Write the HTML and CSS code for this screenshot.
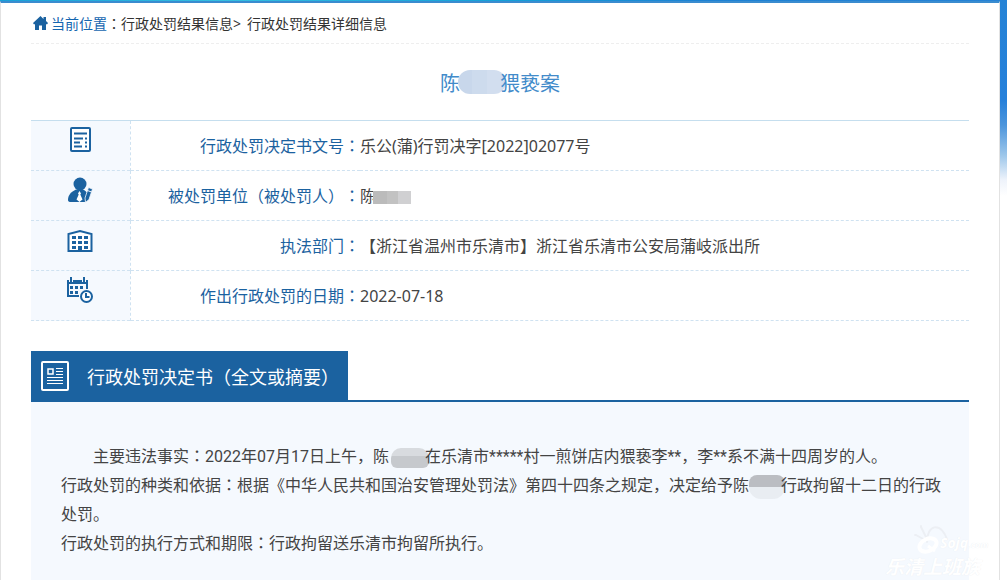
FILE: index.html
```html
<!DOCTYPE html>
<html lang="zh-CN">
<head>
  <meta charset="UTF-8" />
  <meta name="viewport" content="width=device-width, initial-scale=1.0" />
  <title>行政处罚结果详细信息</title>
  <link rel="stylesheet" href="styles.css">
</head>
<body>
  <main class="page">
    <!-- Breadcrumb -->
    <nav class="crumbs">
      <svg class="home" viewBox="0 0 15 14" aria-hidden="true">
        <path d="M7.500 0 0 7l.8 1.200H2V14h4V9.500h3V14h4V8.200h1.200L15 7l-2-2V1h-2.500v2z" fill="#1b62a0"/>
      </svg>
      <span class="here">当前位置</span><span class="colon">：</span><a href="#">行政处罚结果信息</a><span class="sep">&gt;</span><a href="#">行政处罚结果详细信息</a>
    </nav>

    <h1 class="title">陈<span class="mask mask-title"></span>猥亵案</h1>

    <!-- Case summary -->
    <table class="info">
      <tr>
        <td class="icon">
          <svg viewBox="0 0 26 26" aria-hidden="true">
            <rect x="4" y="1" width="19" height="23" rx="1" fill="#fff" stroke="#1b62a0" stroke-width="2"/>
            <path d="M7 6.500h13M7 11.500h9M7 15.500h6M7 19.500h8M18 11.500h2M18 15.500h2M18 19.500h2" stroke="#1b62a0" stroke-width="2"/>
          </svg>
        </td>
        <th scope="row">行政处罚决定书文号<span class="colon">：</span></th>
        <td>乐公(蒲)行罚决字[2022]02077号</td>
      </tr>
      <tr>
        <td class="icon">
          <svg viewBox="0 0 26 26" aria-hidden="true">
            <circle cx="13" cy="7" r="6.500" fill="#1b62a0"/>
            <path d="M1 23c0-5 3-8 8-10.500h7c2 1 3.500 2 4.500 4L18 25H4c-2 0-3-.5-3-2z" fill="#1b62a0"/>
            <path d="M12.500 14 11 16.500l.7 1L9.500 22.500l3 2.500 3-2.500-2.200-5 .7-1z" fill="#fff"/>
            <path d="m21.500 10.500 4 1.500-3.500 10.500-3.500 3-.5-4.500z" fill="#1b62a0" stroke="#f5f9fe" stroke-width=".8"/>
            <path d="m20.500 13.500 4 1.500" stroke="#f5f9fe"/>
          </svg>
        </td>
        <th scope="row">被处罚单位（被处罚人）<span class="colon">：</span></th>
        <td>陈<span class="mask mask-name"></span></td>
      </tr>
      <tr>
        <td class="icon">
          <svg viewBox="0 0 26 26" aria-hidden="true">
            <path d="M1.500 24V7L13 4l11.500 3v17z" fill="#fff" stroke="#1b62a0" stroke-width="2"/>
            <path d="M5 10.500h16M5 15.500h16M5 20.500h16" stroke="#1b62a0" stroke-width="3" stroke-dasharray="4 2"/>
            <path d="M11 19h4v6h-4z" fill="#1b62a0"/>
          </svg>
        </td>
        <th scope="row">执法部门<span class="colon">：</span></th>
        <td>【浙江省温州市乐清市】浙江省乐清市公安局蒲岐派出所</td>
      </tr>
      <tr>
        <td class="icon">
          <svg viewBox="0 0 26 26" aria-hidden="true">
            <path d="M1 4v15h11M20 4v8" fill="none" stroke="#1b62a0" stroke-width="2"/>
            <path d="M0 3h21v4H0z" fill="#1b62a0"/>
            <path d="M4 0v5M17 0v5" stroke="#f5f9fe" stroke-width="4"/>
            <path d="M4 0v5M17 0v5" stroke="#1b62a0" stroke-width="2"/>
            <path d="M3 10.500h14M3 15.500h9" stroke="#1b62a0" stroke-width="3" stroke-dasharray="3 2"/>
            <circle cx="19.500" cy="19.500" r="5.500" fill="#fff" stroke="#1b62a0" stroke-width="2"/>
            <path d="M19 16v4h3.500" fill="none" stroke="#1b62a0" stroke-width="2"/>
          </svg>
        </td>
        <th scope="row">作出行政处罚的日期<span class="colon">：</span></th>
        <td>2022-07-18</td>
      </tr>
    </table>

    <!-- Decision text -->
    <section class="decision">
      <div class="decision-head">
        <h2>
          <svg viewBox="0 0 28 30" aria-hidden="true">
            <rect x="1" y="1" width="26" height="28" rx="1" fill="none" stroke="#fff" stroke-width="2"/>
            <rect x="7" y="8" width="5" height="5" fill="none" stroke="#fff" stroke-width="1.500"/>
            <path d="M15 7.500h7M15 10.500h7M15 13.500h7M6 16.500h16M6 19.500h16M6 22.500h16" stroke="#fff"/>
          </svg>
          行政处罚决定书（全文或摘要）
        </h2>
      </div>
      <div class="decision-body">
        <p class="indent">主要违法事实<span class="colon">：</span>2022年07月17日上午，陈<span class="mask mask-fact"></span>在乐清市*****村一煎饼店内猥亵李**，李**系不满十四周岁的人。</p>
        <p>行政处罚的种类和依据<span class="colon">：</span>根据《中华人民共和国治安管理处罚法》第四十四条之规定，决定给予陈<span class="mask mask-ruling"></span>行政拘留十二日的行政处罚。</p>
        <p>行政处罚的执行方式和期限<span class="colon">：</span>行政拘留送乐清市拘留所执行。</p>
      </div>
    </section>
  </main>

  <!-- Watermark -->
  <div class="watermark">
    <div class="mark-logo">
      <svg viewBox="0 0 40 30" aria-hidden="true">
        <path d="M13 18C13 1 26-3 33 15M2 11l9 5M7 3l5 10M1 11h1M7 2v1" fill="none" stroke="#eceff4" stroke-width="2" stroke-linecap="round"/>
        <ellipse cx="14" cy="21" rx="9" ry="6" transform="rotate(-25 14 21)" fill="none" stroke="#fff" stroke-width="4"/>
        <path d="m14 22 7 5" stroke="#fff" stroke-width="3"/>
      </svg>
      <span>Sojq<small>.com</small></span>
    </div>
    <div class="mark-name">乐清上班族</div>
  </div>
</body>
</html>
```

FILE: styles.css
```css
:root {
  --blue: #1b62a0;
  --text: #444;
  --panel: #f5f9fe;
  --line: #cfe2f1;
}

* {
  box-sizing: border-box;
}

body {
  margin: 0;
  height: 100vh;
  padding: 1px 7px 0 0;
  overflow: hidden;
  position: relative;
  display: flex;
  font-family: "Noto Sans", "Noto Sans CJK SC", sans-serif;
  font-size: 16px;
  color: var(--text);
  text-spacing-trim: space-all;
  background:
    linear-gradient(to right, #18a0d8, #35bfe0 22%, #14a0d8 50%, #1c82d4 70%, transparent 99%) top / 100% 1px no-repeat,
    linear-gradient(#2583d6, #2680da 100px, #4c95dc 125px, #9cc6ea 155px, #eef3fb 180px, #fff 196px);
}

.page {
  flex: 1;
  min-width: 0;
  display: flex;
  flex-direction: column;
  padding: 0 30px;
  background: #fff;
  border: 1px solid #e2e2e2;
  border-top: 2px solid #3a8ccf;
  border-bottom: 0;
}

/* Full-width colon centred in its box */
.colon {
  font-family: "Noto Sans CJK JP", sans-serif;
  line-height: 1;
  -webkit-locale: "ja";
}

/* Breadcrumb */
.crumbs {
  display: flex;
  align-items: center;
  height: 41px;
  flex: none;
  padding-left: 2px;
  font-size: 14px;
  color: #333;
  border-bottom: 1px dashed #eee;
}

.crumbs a {
  color: #333;
  text-decoration: none;
}

.crumbs .sep {
  margin-right: 6px;
}

.home {
  width: 15px;
  height: 14px;
  margin-right: 3px;
}

.here {
  color: #1566b0;
}

.title {
  margin: 26px 0 22px;
  font-size: 20px;
  line-height: 28px;
  font-weight: 400;
  text-align: center;
  color: #428bca;
}

/* Pixelated name covers */
.mask {
  display: inline-block;
  vertical-align: middle;
}

.mask-title {
  width: 48px;
  height: 24px;
  margin: -8px -6px 0 -2px;
  border-radius: 12px;
  background: linear-gradient(to right, #c8d7eb 30%, #cddbed 30% 60%, #d2deef 60%);
}

.mask-name {
  width: 38px;
  height: 13px;
  margin-left: -3px;
  background: linear-gradient(to right, #bbb 36%, #c2c2c2 36% 66%, #d0d0d2 66%);
}

.mask-fact {
  width: 38px;
  height: 20px;
  margin: 0 -4px 0 2px;
  border-radius: 10px 10px 6px 6px;
  background: linear-gradient(#d8dbdf 40%, #c6c9cd 40%);
}

.mask-ruling {
  width: 36px;
  height: 24px;
  margin: 0 -4px 0 0;
  border-radius: 8px 8px 12px 12px;
  background: linear-gradient(#bbbdc2 50%, #e9edf2 50%);
}

/* Case summary */
.info {
  width: 100%;
  border-collapse: collapse;
  border-top: 1px solid #c5deee;
}

.info tr {
  height: 50px;
  border-bottom: 1px dashed var(--line);
}

.info th,
.info td {
  padding: 0;
  line-height: 24px;
  text-align: left;
}

.info th {
  width: 230px;
  font-weight: 400;
  text-align: right;
  color: var(--blue);
}

.info .icon {
  width: 99px;
  padding-top: 6px;
  vertical-align: top;
  background: var(--panel);
  border-right: 1px dashed var(--line);
}

.icon svg {
  display: block;
  width: 26px;
  height: 26px;
  margin: 0 auto;
}

/* Decision text */
.decision {
  flex: 1;
  display: flex;
  flex-direction: column;
  margin-top: 30px;
}

.decision-head {
  display: flex;
  border-bottom: 2px solid var(--blue);
}

.decision-head h2 {
  display: flex;
  align-items: center;
  gap: 18px;
  height: 49px;
  margin: 0;
  padding: 0 9px 0 10px;
  font-size: 18px;
  font-weight: 400;
  color: #fff;
  background: var(--blue);
}

.decision-head svg {
  width: 28px;
  height: 30px;
}

.decision-body {
  flex: 1;
  padding: 40px 24px 24px 30px;
  font-family: Roboto, "Noto Sans CJK SC", sans-serif;
  line-height: 29px;
  background: var(--panel);
}

.decision-body p {
  margin: 0;
}

.decision-body .indent {
  text-indent: 32px;
}

.decision-body .mask {
  text-indent: 0;
}

/* Watermark */
.watermark {
  position: absolute;
  right: 0;
  bottom: 0;
  width: 122px;
  overflow: hidden;
  white-space: nowrap;
  font-style: italic;
  font-weight: 700;
  color: #fff;
  text-shadow: 0 0 1px #e6eaef;
  pointer-events: none;
}

.mark-logo {
  display: flex;
  align-items: flex-end;
  padding-left: 29px;
  font-size: 14px;
  line-height: 18px;
}

.mark-logo svg {
  width: 40px;
  height: 30px;
  margin-right: -14px;
}

.mark-logo small {
  font-size: 9px;
}

.mark-name {
  font-size: 19px;
  line-height: 26px;
}
```
